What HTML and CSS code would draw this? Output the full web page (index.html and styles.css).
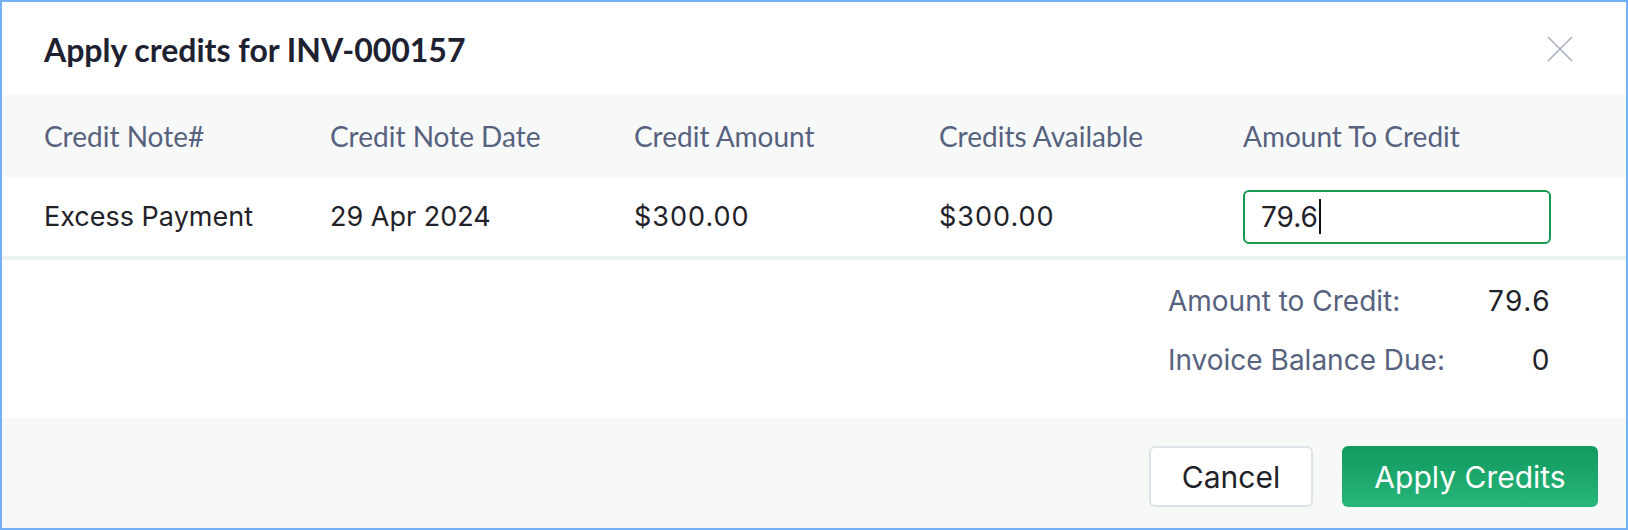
FILE: index.html
```html
<!DOCTYPE html>
<html lang="en">
<head>
<meta charset="utf-8">
<title>Apply credits</title>
<link rel="stylesheet" href="styles.css">
</head>
<body>
<div class="dialog">
  <header class="dlg-head">
    <h1 class="dlg-title">Apply credits for INV-000157</h1>
    <button class="close" aria-label="Close">
      <svg width="26" height="26" viewBox="0 0 26 26"><path d="M1 1L25 25M25 1L1 25" stroke="#a9b0be" stroke-width="1.6" fill="none"/></svg>
    </button>
  </header>
  <div class="grid thead">
    <div>Credit Note#</div>
    <div>Credit Note Date</div>
    <div>Credit Amount</div>
    <div>Credits Available</div>
    <div>Amount To Credit</div>
  </div>
  <div class="grid trow">
    <div>Excess Payment</div>
    <div>29 Apr 2024</div>
    <div class="amt">$300.00</div>
    <div class="amt">$300.00</div>
    <div><div class="input"><span class="val">79.6</span><span class="caret"></span></div></div>
  </div>
  <div class="summary">
    <div class="sum-grid">
      <div class="lbl">Amount to Credit:</div><div class="num">79.6</div>
      <div class="lbl">Invoice Balance Due:</div><div class="num">0</div>
    </div>
  </div>
  <footer class="dlg-foot">
    <button class="btn btn-cancel">Cancel</button>
    <button class="btn btn-apply">Apply Credits</button>
  </footer>
</div>
</body>
</html>
```
FILE: styles.css
```css
* { box-sizing: border-box; }
html, body { margin: 0; padding: 0; background: #fff; }
.dialog {
  width: 1628px;
  height: 530px;
  border: 2px solid #74b0f8;
  display: flex;
  flex-direction: column;
  font-family: Inter, "Liberation Sans", sans-serif;
  color: #1f2229;
}
.dlg-head {
  height: 93px;
  display: flex;
  align-items: center;
  justify-content: space-between;
  padding: 0 53px 0 42px;
}
.dlg-title {
  margin: 0;
  font-family: Lato, sans-serif;
  font-weight: 700;
  font-size: 32px;
  color: #1d2130;
  padding-top: 2px;
}
.close {
  border: 0;
  background: none;
  padding: 0;
  width: 26px;
  height: 26px;
  display: flex;
}
.grid {
  display: grid;
  grid-template-columns: 286px 304px 305px 304px 1fr;
  padding: 0 75px 0 42px;
  align-items: center;
}
.thead {
  height: 82px;
  background: #f7f9f9;
  font-family: Lato, sans-serif;
  font-size: 28px;
  color: #56627e;
}
.trow {
  height: 83px;
  border-bottom: 4px solid #ebf0f2;
  font-size: 27px;
}
.amt { letter-spacing: 1px; }
.input {
  height: 54px;
  border: 2px solid #169a50;
  border-radius: 6px;
  display: flex;
  align-items: center;
  padding-left: 16px;
  font-size: 28px;
  margin-top: 0;
}
.caret {
  width: 2px;
  height: 35px;
  background: #111;
  margin-left: 1px;
}
.summary {
  height: 158px;
  display: flex;
  justify-content: flex-end;
  padding: 25px 76px 0 0;
}
.sum-grid {
  display: grid;
  grid-template-columns: auto 105px;
  row-gap: 26px;
  align-content: start;
  font-size: 28px;
  line-height: 33px;
}
.lbl { color: #56627e; }
.num { text-align: right; color: #1f2229; letter-spacing: 1.5px; margin-right: -1px; }
.dlg-foot {
  flex: 1;
  background: #f7f9f9;
  display: flex;
  justify-content: flex-end;
  align-items: flex-start;
  padding: 28px 28px 0 0;
  gap: 29px;
}
.btn {
  height: 61px;
  border-radius: 6px;
  font-family: Inter, "Liberation Sans", sans-serif;
  font-size: 30px;
  padding: 0;
}
.btn-cancel {
  width: 164px;
  background: #fff;
  border: 2px solid #dde3e8;
  color: #1f2229;
}
.btn-apply {
  width: 256px;
  border: 0;
  color: #fff;
  background: linear-gradient(#12995f, #27b67a);
}
```
